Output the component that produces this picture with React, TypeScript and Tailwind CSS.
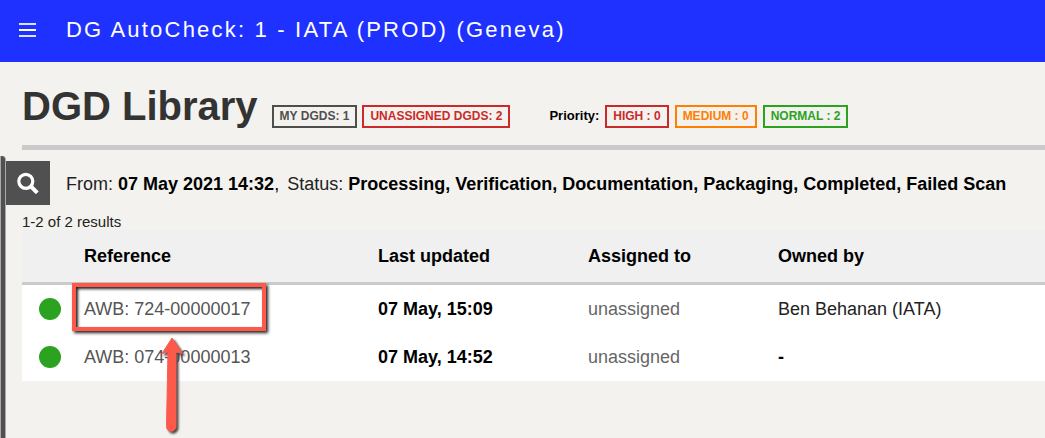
import { clsx } from 'clsx';

type Dgd = {
  reference: string;
  updated: string;
  assignedTo: string;
  ownedBy: string;
  highlighted?: boolean;
};

const dgds: Dgd[] = [
  {
    reference: 'AWB: 724-00000017',
    updated: '07 May, 15:09',
    assignedTo: 'unassigned',
    ownedBy: 'Ben Behanan (IATA)',
    highlighted: true,
  },
  {
    reference: 'AWB: 074-00000013',
    updated: '07 May, 14:52',
    assignedTo: 'unassigned',
    ownedBy: '-',
  },
];

const badgeColors = {
  gray: 'border-[#4d4f4d] text-[#505050]',
  red: 'border-[#cc2a2a] text-[#cc2a2a]',
  orange: 'border-[#ff7f00] text-[#ff7f00]',
  green: 'border-[#2ba320] text-[#2ba320]',
};

const Badge = ({
  color,
  label,
}: {
  color: keyof typeof badgeColors;
  label: string;
}) => (
  <button
    type="button"
    className={clsx(
      'h-[23px] border-2 px-[6px] pb-px text-xs leading-[18px] font-bold whitespace-nowrap',
      badgeColors[color],
    )}
  >
    {label}
  </button>
);

const Header = () => (
  <header className="flex h-[62px] items-center bg-[#1f31ff] pb-[3px] pl-[19px] text-white">
    <button type="button" aria-label="Menu">
      <svg width="17" height="14" viewBox="0 0 17 14" fill="currentColor" className="block">
        <path d="M0 0h17v2H0zM0 12h17v2H0z" opacity="0.85" />
        <path d="M0 6h17v2H0z" />
      </svg>
    </button>
    <span className="pl-[30px] text-[22px] leading-7 tracking-widest whitespace-nowrap">
      DG AutoCheck: 1 - IATA (PROD) (Geneva)
    </span>
  </header>
);

// Frame and arrow drawn over the row that the reader should click
const Callout = () => (
  <span className="pointer-events-none absolute top-[-2px] left-0 z-10">
    <span className="block h-[48px] w-[194px] border-4 border-[#fd5a4c] shadow-[2px_2px_3px_#222,inset_2px_2px_3px_#222]" />
    <svg width="30" height="106" viewBox="0 0 30 106" className="absolute top-[52px] left-[87px]">
      <path
        d="M13 3 L23.500 18.500 L17 17 L17 91.500 A4.700 4.700 0 0 1 7.500 91.500 L9 17 L3 18.500 Z"
        fill="#fd5a4c"
        stroke="#fd5a4c"
        strokeWidth="1"
        strokeLinejoin="round"
        className="drop-shadow-[2px_2px_1px_#444]"
      />
    </svg>
  </span>
);

const DgdTable = () => (
  <table className="w-full table-fixed border-separate border-spacing-0 bg-white text-left text-lg leading-6">
    <thead>
      <tr className="h-[55px] bg-[#f0f0f0] font-bold *:border-b-3 *:border-[#cbcbcb]">
        <td className="w-[50px]" />
        <th className="w-[306px] pl-3">Reference</th>
        <th className="w-[210px]">Last updated</th>
        <th className="w-[190px]">Assigned to</th>
        <th>Owned by</th>
      </tr>
    </thead>
    <tbody>
      {dgds.map((dgd) => (
        <tr key={dgd.reference} className="h-12">
          <td className="pl-[17px]">
            <span className="block size-[22px] rounded-full bg-[#2ba320]" />
          </td>
          <td className="relative pl-3">
            <a href="#" className="text-[#555]">
              {dgd.reference}
            </a>
            {dgd.highlighted && <Callout />}
          </td>
          <td className="font-bold">{dgd.updated}</td>
          <td className="text-[#666]">{dgd.assignedTo}</td>
          <td className={dgd.ownedBy === '-' ? 'font-bold' : 'text-[#222]'}>
            {dgd.ownedBy}
          </td>
        </tr>
      ))}
    </tbody>
  </table>
);

export default function App() {
  return (
    <div className="flex min-h-screen flex-col overflow-x-hidden bg-[#f3f2ee] font-['Liberation_Sans',Arial,sans-serif] text-black">
      <Header />

      <div className="ml-[22px] flex h-[88px] items-start border-b-5 border-[#cbcbcb] pt-5">
        <h1 className="text-[40px] leading-[48px] font-bold whitespace-nowrap text-[#333]">
          DGD Library
        </h1>
        <div className="flex items-center gap-[5px] pt-[23px] pl-[14px]">
          <Badge color="gray" label="MY DGDS: 1" />
          <Badge color="red" label="UNASSIGNED DGDS: 2" />
        </div>
        <div className="flex items-center gap-[6px] pt-[23px] pl-[39px]">
          <span className="pb-[2px] text-[13px] leading-[18px] font-bold">
            Priority:
          </span>
          <Badge color="red" label="HIGH : 0" />
          <Badge color="orange" label="MEDIUM : 0" />
          <Badge color="green" label="NORMAL : 2" />
        </div>
      </div>

      <div className="flex grow">
        <aside className="mt-[6px] w-[6px] shrink-0 rounded-tr border-r border-l border-[#aaa] bg-[#505050]" />
        <main className="min-w-0 grow pt-[11px]">
          <div className="flex items-center">
            <button
              type="button"
              aria-label="Search"
              className="flex size-[44px] items-center justify-center bg-[#505050] text-white"
            >
              <svg width="22" height="22" viewBox="0 0 22 22" fill="none" stroke="currentColor">
                <circle cx="8.800" cy="9.300" r="7" strokeWidth="3.200" />
                <path d="M13.500 14 L20.300 20.800" strokeWidth="4" />
              </svg>
            </button>
            <p className="pt-[2px] pl-4 text-lg leading-6 whitespace-nowrap">
              <span className="text-[#222]">From: </span>
              <b>07 May 2021 14:32</b>,
              <span className="pl-2 text-[#222]">Status: </span>
              <b>
                Processing, Verification, Documentation, Packaging, Completed,
                Failed Scan
              </b>
            </p>
          </div>
          <div className="pt-2 pl-4">
            <p className="text-[15px] leading-[17px] text-[#222]">
              1-2 of 2 results
            </p>
            <DgdTable />
          </div>
        </main>
      </div>
    </div>
  );
}
